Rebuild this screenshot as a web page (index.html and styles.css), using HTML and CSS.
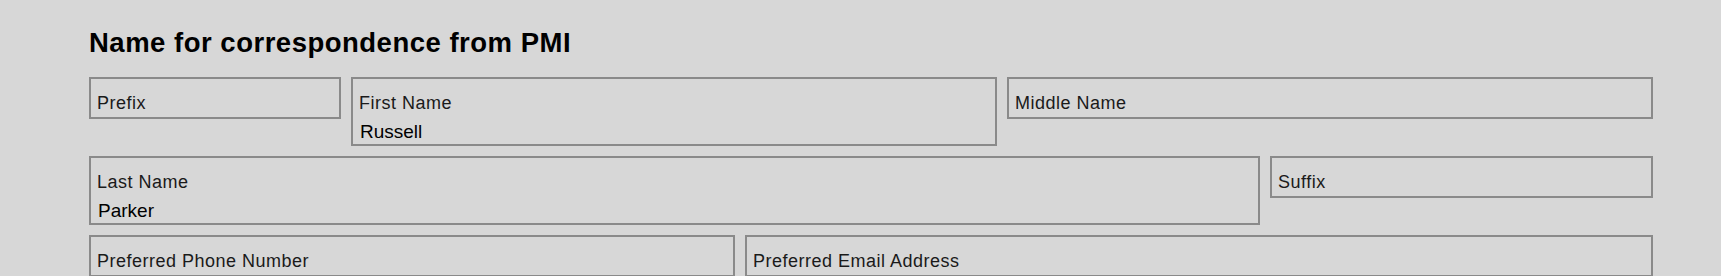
FILE: index.html
```html
<!doctype html>
<html>
  <head>
    <meta charset="utf-8" />
    <link rel="stylesheet" href="styles.css">
  </head>
  <body>
    <div class="container">
      <div class="section-title">Name for correspondence from PMI</div>

      <div class="field-row">
        <div class="field w-prefix">
          <div class="field-label">Prefix</div>
        </div>
        <div class="field w-first">
          <div class="field-label">First Name</div>
          <div class="field-value">Russell</div>
        </div>
        <div class="field w-middle">
          <div class="field-label">Middle Name</div>
        </div>
      </div>

      <div class="field-row">
        <div class="field w-last">
          <div class="field-label">Last Name</div>
          <div class="field-value">Parker</div>
        </div>
        <div class="field w-suffix">
          <div class="field-label">Suffix</div>
        </div>
      </div>

      <div class="field-row">
        <div class="field w-phone">
          <div class="field-label">Preferred Phone Number</div>
        </div>
        <div class="field w-email">
          <div class="field-label">Preferred Email Address</div>
        </div>
      </div>
    </div>
  </body>
</html>
```

FILE: styles.css
```css
* {
  margin: 0;
  padding: 0;
  box-sizing: border-box;
}

body {
  background: #d7d7d7;
  font-family: 'Liberation Sans', Arial, sans-serif;
  color: #1a1a1a;
  overflow: hidden;
}

.container {
  width: 1564px;
  margin-left: 89px;
  padding-top: 28px;
}

.section-title {
  font-size: 27.5px;
  font-weight: 700;
  line-height: 30px;
  color: #000;
  letter-spacing: 0.5px;
  margin-bottom: 19px;
}

.field-row {
  display: flex;
  align-items: flex-start;
  gap: 10px;
  margin-bottom: 10px;
}

.field {
  border: 2px solid #8a8a8a;
  padding: 13px 6px 3px;
}

.field-label {
  font-size: 18px;
  line-height: 22px;
  letter-spacing: 0.5px;
  color: #1a1a1a;
}

.field-value {
  font-size: 19px;
  line-height: 21px;
  color: #000;
  margin: 7px 0 -1px;
  padding-left: 1px;
}

.w-prefix { width: 252px; }
.w-first { width: 646px; }
.w-middle { width: 646px; }
.w-last { width: 1171px; }
.w-suffix { width: 383px; }
.w-phone { width: 646px; }
.w-email { width: 908px; }
```
